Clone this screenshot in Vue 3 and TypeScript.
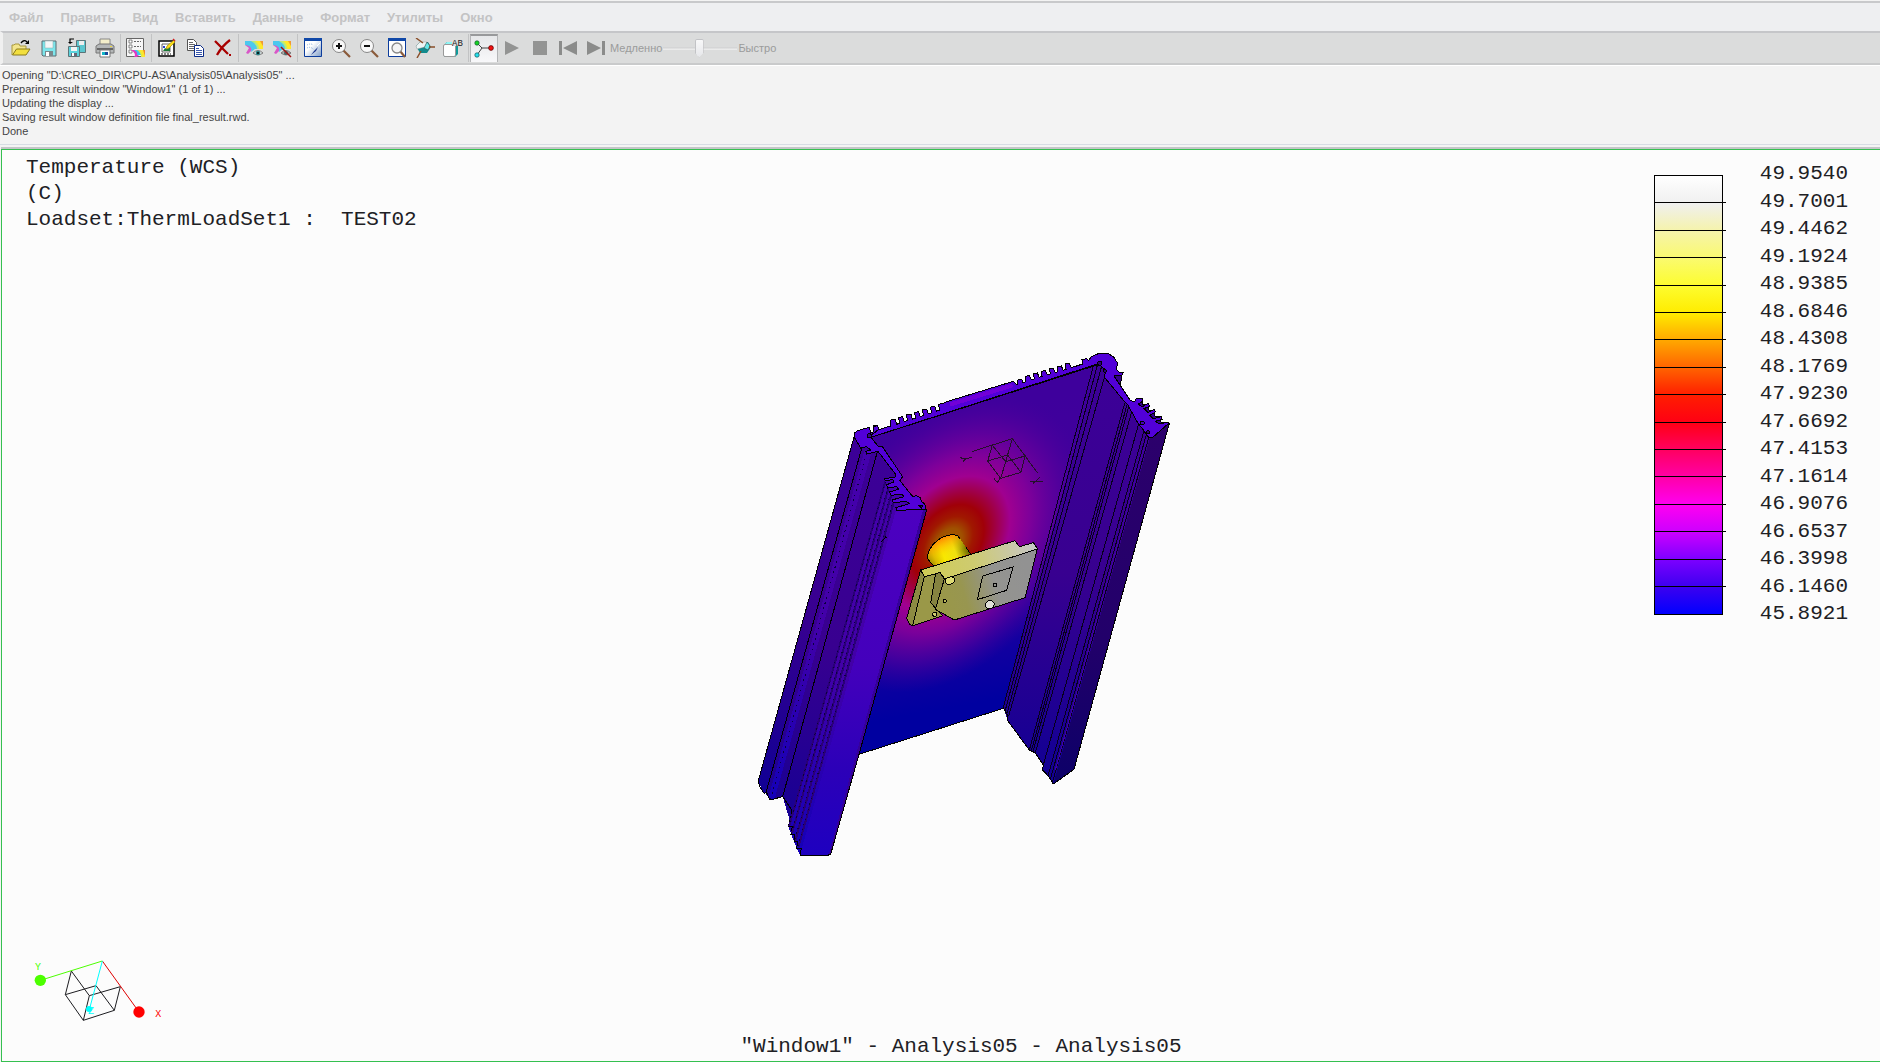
<script setup lang="ts">
const menus: string[] = ['Файл', 'Править', 'Вид', 'Вставить', 'Данные', 'Формат', 'Утилиты', 'Окно']

const messages: string[] = [
  'Opening "D:\\CREO_DIR\\CPU-AS\\Analysis05\\Analysis05" ...',
  'Preparing result window "Window1" (1 of 1) ...',
  'Updating the display ...',
  'Saving result window definition file final_result.rwd.',
  'Done',
]

const levels: string[] = [
  '49.9540', '49.7001', '49.4462', '49.1924', '48.9385', '48.6846', '48.4308', '48.1769', '47.9230',
  '47.6692', '47.4153', '47.1614', '46.9076', '46.6537', '46.3998', '46.1460', '45.8921',
]

const scale: string[] = [
  '#ffffff', '#f0f0f0', '#f5f3ac', '#fafa70', '#fdfd30', '#ffec00', '#ffa800', '#ff6400', '#ff1e00',
  '#ff0014', '#ff0060', '#ff00a8', '#ff00f0', '#cc00ff', '#7c00ff', '#3c00f0', '#0000ff',
]

const ticks: number[] = Array.from({ length: 15 }, (_, i) => Math.round((i + 1) * 27.4))
</script>

<template>
  <div class="app">
    <nav class="menu" aria-label="Меню">
      <button v-for="m in menus" :key="m" type="button">{{ m }}</button>
    </nav>

    <div class="toolbar" role="toolbar">
      <button type="button" aria-label="Открыть">
        <svg viewBox="0 0 20 20"><path d="M1 17V7h2l1-1h4l1 2h6v3" fill="#f3e58c" stroke="#a8983c" /><path d="M1.500 17l4-6H19l-4 6z" fill="#f2df3e" stroke="#8a7a1c" /><path d="M10 5q3-4 6-1" fill="none" stroke="#000" stroke-width="1.300" /><path d="M18 2v4h-4z" fill="#000" /></svg>
      </button>
      <button type="button" aria-label="Сохранить">
        <svg viewBox="0 0 20 20"><path d="M3 3h14v15H4l-1-1z" fill="#7ee6ec" stroke="#5b6b70" /><path d="M6 3h8v7H6z" fill="#f4f6f7" stroke="#8aa" stroke-width=".5" /><path d="M6 13h8v5H6z" fill="#7b888c" /><path d="M7 14h3v4H7z" fill="#fff" /></svg>
      </button>
      <button type="button" aria-label="Сохранить как">
        <svg viewBox="0 0 20 20"><path d="M9.500 2.500h9v12h-9z" fill="#5bc6cf" stroke="#5c7478" /><path d="M12 3h5v4h-5z" fill="#eee" /><path d="M1.500 8.500h11v10h-11z" fill="#5bd3dc" stroke="#5c7478" /><path d="M4 9h6v4H4z" fill="#f4f4f4" /><path d="M4 15h6v3H4z" fill="#667" /><path d="M5 15h2v3H5z" fill="#fff" /><path d="M7 1H3v4" fill="none" stroke="#000" stroke-width="1.200" /><path d="M1 4h5L3 6z" fill="#000" /></svg>
      </button>
      <button type="button" aria-label="Печать">
        <svg viewBox="0 0 20 20"><path d="M5 8V1h10v7" fill="#f3eecb" stroke="#888" /><path d="M1 8l3-2h12l3 2v7H1z" fill="#b4b7b8" stroke="#777" /><path d="M2 10h16v2H2z" fill="#666" /><path d="M5 12h10v7H5z" fill="#fff" stroke="#777" /><path d="M7 14h3v3H7z" fill="#11b6c6" /><path d="M10 14h3v3h-3z" fill="#174a9c" /><path d="M15 8h2v1h-2z" fill="#e8d23a" /></svg>
      </button>
      <span class="sep"></span>
      <button type="button" aria-label="Легенда">
        <svg viewBox="0 0 20 20"><path d="M.5.5h17v18H.5z" fill="#f6f6f6" stroke="#666" /><path d="M3 2h3v3H3zM3 7h3v3H3zM3 12h3v3H3z" fill="#fff" stroke="#555" stroke-width=".7" /><path d="M8 3.500h7M8 8.500h7" stroke="#666" stroke-dasharray="2 1" /><path d="M5 12h14v7h-4v-2h-2l-2 2H8q3-3-3-7z" fill="#e03ac0" /><path d="M8 12h11v7h-4v-2h-4q1-3-3-5z" fill="#37c8f0" /><path d="M11 12h8v7h-4q0-4-4-7z" fill="#c8ee55" /><path d="M13 12h6v7h-3q0-4-3-7z" fill="#f9e830" /><path d="M17 12h2v6z" fill="#f08a28" /></svg>
      </button>
      <span class="sep"></span>
      <button type="button" aria-label="Изменить">
        <svg viewBox="0 0 20 20"><path d="M2 3h15v15H2z" fill="#fff" stroke="#000" stroke-width="1.500" /><path d="M5 6h8v8H5z" fill="#fff" stroke="#222" stroke-width=".7" /><path d="M6 13l2-3 2 1 3-2v4z" fill="#197a35" /><path d="M4 16h10" stroke="#111" stroke-dasharray="2 1" /><path d="M6 8h2v2H6z" fill="#2a3fd0" /><path d="M9 11l1-3 7-6 1 2-6 6z" fill="#ffe018" stroke="#9d8a10" stroke-width=".7" /><path d="M16 1l2 2" stroke="#d02020" stroke-width="1.500" /></svg>
      </button>
      <button type="button" aria-label="Копировать">
        <svg viewBox="0 0 20 20"><path d="M2.500 1.500h6l3 3v8h-9z" fill="#fff" stroke="#555" /><path d="M4 4.500h4M4 6.500h6M4 8.500h6M4 10.500h6" stroke="#666" /><path d="M9.500 7.500h6l3 3v8h-9z" fill="#fff" stroke="#0b2a86" /><path d="M11 10.500h3M11 12.500h6M11 14.500h6M11 16.500h6" stroke="#3656ac" /></svg>
      </button>
      <button type="button" aria-label="Удалить">
        <svg viewBox="0 0 20 20"><path d="M2 3l13 13M17 2Q9 8 4 17" fill="none" stroke="#a80000" stroke-width="2.300" /><path d="M16 17h2" stroke="#a80000" stroke-width="2" /></svg>
      </button>
      <span class="sep"></span>
      <button type="button" aria-label="Показать">
        <svg viewBox="0 0 20 20"><path d="M1 3h18v8H9l-5 5-2-1 3-5-4-3z" fill="#d858c8" /><path d="M1 3h18v8h-8l-4 3q2-6-6-7z" fill="#4cc8ee" /><path d="M7 3h12v8h-6q0-5-6-8z" fill="#b8ec7a" /><path d="M11 3h8v8h-4q0-5-4-8z" fill="#ffe92a" /><path d="M16 3h3v5z" fill="#f29a32" /><path d="M9 15q5-5 10 0-5 4-10 0z" fill="#ddd" stroke="#666" stroke-width=".8" /><circle cx="14" cy="15" r="2.300" fill="#27878c" /><circle cx="14" cy="15" r="1" /></svg>
      </button>
      <button type="button" aria-label="Скрыть">
        <svg viewBox="0 0 20 20"><path d="M1 3h18v8H9l-5 5-2-1 3-5-4-3z" fill="#d858c8" /><path d="M1 3h18v8h-8l-4 3q2-6-6-7z" fill="#4cc8ee" /><path d="M7 3h12v8h-6q0-5-6-8z" fill="#b8ec7a" /><path d="M11 3h8v8h-4q0-5-4-8z" fill="#ffe92a" /><path d="M16 3h3v5z" fill="#f29a32" /><path d="M9 15q5-5 10 0-5 4-10 0z" fill="#aaa" stroke="#666" stroke-width=".8" /><circle cx="14" cy="15" r="2" fill="#466" /><path d="M9 9l10 10" stroke="#a01010" stroke-width="1.500" /></svg>
      </button>
      <span class="sep"></span>
      <button type="button" aria-label="Перерисовать">
        <svg viewBox="0 0 20 20"><defs><linearGradient id="pane" x2="1" y2="1"><stop offset=".4" stop-color="#fff" /><stop offset="1" stop-color="#7e9cc8" /></linearGradient></defs><path d="M1.500.5h17v18h-17z" fill="url(#pane)" stroke="#0c3c9c" /><path d="M1 0h18v3H1z" fill="#1048a8" /><path d="M4 7q4-2 6 0M4 10q4-2 7 2" fill="none" stroke="#8ab0dc" stroke-dasharray="1 1" /><path d="M15 9l-2 4-5 4 3-4z" fill="#16318c" /><path d="M14 8l3-3" stroke="#fff" /></svg>
      </button>
      <button type="button" aria-label="Увеличить">
        <svg viewBox="0 0 20 20"><path d="M12 12l7 7" stroke="#8a5a3a" stroke-width="2.200" /><circle cx="8" cy="8" r="6.500" fill="#f8f8f8" stroke="#888" /><path d="M5 8h6M8 5v6" stroke="#111" stroke-width="2" /></svg>
      </button>
      <button type="button" aria-label="Уменьшить">
        <svg viewBox="0 0 20 20"><path d="M12 12l7 7" stroke="#8a5a3a" stroke-width="2.200" /><circle cx="8" cy="8" r="6.500" fill="#f8f8f8" stroke="#888" /><path d="M5 8h6" stroke="#111" stroke-width="2" /></svg>
      </button>
      <button type="button" aria-label="Вписать">
        <svg viewBox="0 0 20 20"><path d="M1.500.5h17v18h-17z" fill="#fff" stroke="#0c3c9c" /><path d="M1 0h18v3H1z" fill="#1048a8" /><path d="M13 13l5 6" stroke="#8a5a3a" stroke-width="2.200" /><circle cx="10" cy="10" r="5" fill="#f4f4f4" stroke="#888" stroke-width="1.300" /></svg>
      </button>
      <button type="button" aria-label="Ориентация">
        <svg viewBox="0 0 20 20"><path d="M1 8l4-4h8l3 5-4 6-7 0z" fill="#128b8e" /><path d="M1 8l4-4h7l-2 5-8 2z" fill="#eef5f5" stroke="#888" stroke-width=".4" /><path d="M12 4l3 4-2 4-4-2z" fill="#66e8e8" stroke="#333" stroke-width=".5" /><path d="M1 0l7 5M14 9h6M2 20l4-7" fill="none" stroke="#8a4f2a" stroke-width="1.500" /></svg>
      </button>
      <button type="button" aria-label="Сохранённые виды">
        <svg viewBox="0 0 20 20"><path d="M1 7l3-3h11v12l-3 3H1z" fill="#0f9a9a" /><path d="M1 7l3-3h10l-2 3z" fill="#8ef4f4" /><rect x=".5" y="6.500" width="12" height="12" rx="1.500" fill="#fff" stroke="#999" /><path d="M9 0h11v8H9z" fill="#dcdddd" /><text x="9" y="8" class="tiny">AB</text></svg>
      </button>
      <span class="sep"></span>
      <button type="button" class="pressed" aria-label="Система координат" aria-pressed="true">
        <svg viewBox="0 0 20 20"><path d="M3 4l5 5h9M8 9l-5 7" fill="none" stroke="#444" /><circle cx="3" cy="4" r="2.200" fill="#16d422" stroke="#153" stroke-width=".7" /><circle cx="17" cy="9" r="2.400" fill="#f21010" stroke="#500" stroke-width=".7" /><circle cx="3" cy="16" r="2.200" fill="#27e0ee" stroke="#155" stroke-width=".7" /></svg>
      </button>
      <button type="button" disabled aria-label="Пуск"><svg viewBox="0 0 20 20"><path d="M3 3l14 7-14 7z" fill="#939493" /></svg></button>
      <button type="button" disabled aria-label="Стоп"><svg viewBox="0 0 20 20"><path d="M3 3h14v14H3z" fill="#939493" /></svg></button>
      <button type="button" disabled aria-label="Назад"><svg viewBox="0 0 20 20"><path d="M1 3h3v14H1zM19 3v14L5 10z" fill="#8b8c8b" /></svg></button>
      <button type="button" disabled aria-label="Вперёд"><svg viewBox="0 0 20 20"><path d="M16 3h3v14h-3zM1 3v14l14-7z" fill="#8b8c8b" /></svg></button>
      <label class="speed">
        <span>Медленно</span>
        <input type="range" min="0" max="100" value="48" disabled />
        <span>Быстро</span>
      </label>
    </div>

    <section class="log">
      <p v-for="m in messages" :key="m">{{ m }}</p>
    </section>

    <main class="view">
      <div class="left">
        <div class="labels">
          <p>Temperature (WCS)</p>
          <p>(C)</p>
          <p>Loadset:ThermLoadSet1 :&nbsp; TEST02</p>
        </div>
        <svg class="triad" viewBox="90 50 420 210" fill="none" stroke-width="3">
          <path d="M214 92L196 163 250 240 343 210 361 139 268 166zM268 166L250 240M196 163L288 136 343 210" stroke="#1c1c20" />
          <path d="M307 62L121 120" stroke="#4cff00" />
          <path d="M307 62L417 215" stroke="#e00000" />
          <path d="M307 62L268 208" stroke="#00ffff" />
          <circle cx="121" cy="120" r="17" fill="#4cff00" />
          <circle cx="417" cy="215" r="17" fill="#ff0000" />
          <circle cx="267" cy="206" r="9" fill="#00ffff" />
          <text x="105" y="90" fill="#4cff00">Y</text>
          <text x="466" y="231" fill="#ff0000">X</text>
          <text x="264" y="222" fill="#00ffff">Z</text>
        </svg>
      </div>

      <svg class="model" viewBox="2133 1020 1380 1560" fill="none" stroke-width="3">
        <defs>
          <linearGradient id="wall" gradientUnits="userSpaceOnUse" x1="250" y1="240" x2="430" y2="1240">
            <stop offset="0" stop-color="#3e009c" /><stop offset=".4" stop-color="#44009c" /><stop offset=".52" stop-color="#34009e" /><stop offset=".68" stop-color="#1400a0" /><stop offset=".85" stop-color="#0000a0" /><stop offset="1" stop-color="#0000a0" />
          </linearGradient>
          <radialGradient id="heat" gradientUnits="userSpaceOnUse" cx="0" cy="0" r="1" gradientTransform="translate(325 610) rotate(-52) scale(500 345)">
            <stop offset="0" stop-color="#a06000" /><stop offset=".1" stop-color="#a05000" /><stop offset=".18" stop-color="#a01800" /><stop offset=".26" stop-color="#a00008" /><stop offset=".34" stop-color="#a00040" /><stop offset=".45" stop-color="#a00090" /><stop offset=".6" stop-color="#84009a" stop-opacity=".9" /><stop offset=".78" stop-color="#68009c" stop-opacity=".55" /><stop offset="1" stop-color="#4a009c" stop-opacity="0" />
          </radialGradient>
          <linearGradient id="front" x2="0" y2="1"><stop offset="0" stop-color="#4c00c0" /><stop offset=".45" stop-color="#4400bc" /><stop offset=".75" stop-color="#2c00b8" /><stop offset="1" stop-color="#1e00c0" /></linearGradient>
          <linearGradient id="side" x2="0" y2="1"><stop offset="0" stop-color="#3c0098" /><stop offset=".5" stop-color="#380090" /><stop offset="1" stop-color="#100094" /></linearGradient>
          <linearGradient id="lite" x2="0" y2="1"><stop offset="0" stop-color="#4400ac" /><stop offset=".5" stop-color="#4200a8" /><stop offset="1" stop-color="#1400b8" /></linearGradient>
          <linearGradient id="dark" x2="0" y2="1"><stop offset="0" stop-color="#2c006c" /><stop offset=".6" stop-color="#22006a" /><stop offset="1" stop-color="#0c0068" /></linearGradient>
          <linearGradient id="plate" gradientUnits="userSpaceOnUse" x1="140" y1="240" x2="410" y2="160"><stop offset="0" stop-color="#9a9848" /><stop offset=".3" stop-color="#989650" /><stop offset=".65" stop-color="#949490" /><stop offset="1" stop-color="#929292" /></linearGradient>
          <linearGradient id="top" gradientUnits="userSpaceOnUse" x1="100" y1="160" x2="430" y2="70"><stop offset="0" stop-color="#cfcc55" /><stop offset=".45" stop-color="#cecb70" /><stop offset="1" stop-color="#c6c6c6" /></linearGradient>
          <linearGradient id="rod" gradientUnits="userSpaceOnUse" x1="112" y1="118" x2="228" y2="75"><stop offset="0" stop-color="#8c7800" /><stop offset=".18" stop-color="#d8b800" /><stop offset=".4" stop-color="#f8e800" /><stop offset=".7" stop-color="#eee010" /><stop offset="1" stop-color="#706c00" /></linearGradient>
          <linearGradient id="tip" gradientUnits="userSpaceOnUse" x1="142" y1="58" x2="168" y2="112"><stop offset="0" stop-color="#ff8000" /><stop offset="1" stop-color="#ffe800" stop-opacity="0" /></linearGradient>
        </defs>

        <!-- base wall -->
        <g transform="translate(2520 1020)">
          <path d="M88 290L778 68 490 1105 57 1243 60 700z" fill="url(#wall)" />
          <path d="M88 290L778 68 490 1105 57 1243 60 700z" fill="url(#heat)" />
          <path d="M490 1105L57 1243" stroke="#000" />
        </g>

        <!-- right profile -->
        <g transform="translate(2940 1020)">
          <path d="M355 68L378 95 440 190 460 200 510 292 568 250 282 1288 220 1332 208 1312 188 1290 190 1275 165 1238 148 1230 83 1142 70 1102z" fill="url(#side)" />
          <path d="M510 292L568 250 282 1288 220 1332z" fill="url(#dark)" />
          <path d="M568 250L282 1288 220 1332 208 1312 188 1290 190 1275 165 1238 148 1230 83 1142 82 1125 70 1102" stroke="#000" />
          <path d="M340 78L70 1102M352 76L76 1110M364 82L80 1124M378 95L86 1128M434 190L148 1230M441 194L154 1232M448 194L159 1234M459 202L166 1238M475 255L190 1275M492 272L204 1308M500 280L211 1318M508 286L217 1328" stroke="#07001c" />
          <path d="M500 296L226 1290" stroke="#4200a4" />
        </g>

        <!-- top rim with cooling fins -->
        <g transform="translate(2520 1020)" stroke="#000">
          <path d="M846 100L838 160 812 126 818 108z" fill="#35008a" />
          <path d="M880 186L906 176 906 192 926 194 926 210 944 212 944 228 964 232 962 246 984 250 940 276z" fill="#32008a" />
          <path d="M88 290L102 272 100 258 112 256 116 269 152 258 153 240 166 238 170 253 178 250 176 232 188 230 193 245 202 242 200 224 213 222 217 238 226 235 224 217 236 215 241 230 250 227 248 209 260 207 265 222 274 219 272 201 284 199 289 214 298 211 296 193 310 190 320 185 520 124 531 134 534 120 546 119 549 128 558 125 556 109 568 107 574 120 583 117 580 101 592 99 598 112 606 109 604 94 616 92 622 105 631 102 628 87 640 85 646 98 654 95 652 80 664 78 670 91 678 88 676 72 688 70 694 83 728 72 726 59 740 56 746 62 754 50 775 41 806 41 822 52 834 72 828 86 838 98 850 98 845 106 822 108 870 180 884 186 890 174 908 174 908 184 895 192 906 201 924 190 930 198 912 206 924 218 944 208 946 216 930 226 940 236 964 230 966 238 946 244 960 252 986 246 984 252 938 292 926 292 904 262 894 250 862 192 856 188 792 110 800 92 784 80 778 70 96 291z" fill="#5200d8" />
          <path d="M330 194L518 136" stroke="#7200d8" stroke-width="12" />
          <path d="M96 291L780 72" />
          <circle cx="779" cy="70" r="6" fill="#2d0078" /><circle cx="794" cy="92" r="5" fill="#2d0078" /><circle cx="907" cy="249" r="6" fill="#4600b8" /><circle cx="924" cy="277" r="5" fill="#2d0078" />
        </g>

        <!-- left profile -->
        <g transform="translate(2220 1200)">
          <path d="M343 110L414 150 480 240 470 330 180 1365 128 1190 90 1200 55 1145z" fill="url(#side)" />
          <path d="M343 110L366 145 78 1178 70 1178 55 1145z" fill="url(#side)" />
          <path d="M374 150L394 158 104 1196 90 1200 86 1190z" fill="url(#lite)" />
          <path d="M436 238L480 240 520 320 470 330 180 1365 170 1344 162 1325 153 1300 145 1280z" fill="url(#lite)" />
          <path d="M468 330L558 328 547 380 272 1362 256 1368 180 1365z" fill="url(#front)" />
          <path d="M549 330L560 328 357 1063 272 1364 266 1364z" fill="#36009a" />
          <path d="M343 108L55 1142 58 1158 72 1180 80 1178 90 1200 128 1190 155 1230 155 1240 145 1280 157 1280 153 1302 165 1302 162 1325 174 1324 170 1344 184 1344 180 1365 256 1368 272 1363 357 1063 560 330" stroke="#000" />
          <path d="M365 145L78 1178M412 155L128 1190" stroke="#000" />
          <path d="M436 245L148 1278M446 262L156 1300M455 280L166 1322M463 300L175 1342" stroke="#2a0078" stroke-width="6" />
          <path d="M380 160L92 1198M436 245L148 1278M444 262L155 1300M452 280L164 1322M460 300L173 1342" stroke="#0c0040" stroke-dasharray="4 12" />
          <path d="M425 425l12-14 4 2" stroke="#000" />
          <path d="M345 98L352 92 388 82 392 98 400 96 402 80 412 76 416 88 404 98 390 107 404 126 414 138 426 138 488 230 480 242 512 282 520 290 528 286 542 294 544 304 554 312 558 328 470 331 468 323 508 311 500 305 459 307 456 300 492 290 486 282 454 286 448 276 476 268 470 260 443 264 440 254 462 246 458 238 436 243 434 236 466 231 466 222 414 154 382 162 376 154 392 150 380 140 362 144 344 114z" fill="#5200d8" stroke="#000" />
          <circle cx="388" cy="107" r="6" fill="#36008c" stroke="#000" /><path d="M536 316l12 0-4 8z" fill="#250066" stroke="#000" />
        </g>

        <!-- reference coordinate system -->
        <g transform="translate(2520 1020)" stroke="#26102c">
          <path d="M395 335L517 296 592 398M457 316L443 363 482 415 543 397 555 348 497 365 457 316M517 296L497 365 482 415M443 363L503 345 543 397" />
          <path d="M360 353l17 4 18-5M377 357l-8 8M570 423h40M580 430l20-18M462 416l10 12 8-14" />
        </g>

        <!-- heat source assembly -->
        <g transform="translate(2670 1560)">
          <path d="M112 106Q115 82 145 59 178 38 203 47L212 58 241 101 130 137 114 118z" fill="url(#rod)" />
          <path d="M112 106Q115 82 145 59 178 38 203 47L212 58 241 101 130 137 114 118z" fill="url(#tip)" />
          <path d="M130 137L114 118Q108 88 145 59 178 38 203 47L210 56M228 82L241 101" stroke="#000" />
          <g stroke="#000">
            <path d="M92 150L375 62 388 80 430 68 442 85 440 92 165 177 150 158 103 170z" fill="url(#top)" />
            <path d="M92 150L103 170 68 317 60 314 50 295z" fill="#8c8a42" />
            <path d="M103 170L150 158 125 250 158 287 68 317z" fill="#9a9848" />
            <path d="M150 158L163 177 142 270 122 248 137 160z" fill="#858340" />
            <path d="M163 177L442 87 405 233 193 300 136 268z" fill="url(#plate)" />
            <path d="M278 168L369 141 350 211 262 239z" />
            <path d="M310 190h10v8h-9z" />
            <ellipse cx="180" cy="182" rx="15" ry="11" transform="rotate(-18 180 182)" fill="#dedc76" />
            <ellipse cx="299" cy="254" rx="14" ry="12" transform="rotate(-30 299 254)" fill="#e0e0d8" />
            <circle cx="164" cy="243" r="5" fill="#bcb958" /><circle cx="134" cy="283" r="6" fill="#cfcc70" />
          </g>
        </g>
      </svg>

      <div class="legend">
        <svg class="bar" viewBox="0 0 74 440">
          <defs>
            <linearGradient id="ramp" x2="0" y2="1">
              <stop v-for="(c, i) in scale" :key="i" :offset="i / 16" :stop-color="c" />
            </linearGradient>
          </defs>
          <rect x=".5" y=".5" width="68" height="439" fill="url(#ramp)" stroke="#000" />
          <rect v-for="t in ticks" :key="t" x="0" :y="t" width="72" height="1" />
        </svg>
        <ol>
          <li v-for="l in levels" :key="l">{{ l }}</li>
        </ol>
      </div>

      <p class="caption">"Window1" - Analysis05 - Analysis05</p>
    </main>
  </div>
</template>

<style>
body {
  margin: 0;
  background: #f3f3f3;
}
</style>

<style scoped>
.app {
  display: flex;
  flex-direction: column;
  min-height: 100vh;
  font-family: "Liberation Sans", Arial, sans-serif;
  color: #444;
}

p,
ol {
  margin: 0;
  padding: 0;
  list-style: none;
}

button {
  padding: 0;
  border: 0;
  background: none;
  font: inherit;
  color: inherit;
}

.menu {
  display: flex;
  gap: 17px;
  height: 28px;
  padding-left: 9px;
  margin-top: 1px;
  border-top: 2px solid #c8c9cb;
  background: #eeeff1;
  font-size: 13px;
  font-weight: bold;
  color: #c3c3c4;
}

.toolbar {
  display: flex;
  align-items: center;
  box-sizing: border-box;
  height: 34px;
  padding-left: 4px;
  border-top: 2px solid #c5c6c9;
  border-bottom: 2px solid #c9cacb;
  border-left: 3px solid #f0f0f0;
  background: #dbdcdc;
}

.toolbar button {
  display: flex;
  align-items: center;
  justify-content: center;
  width: 28px;
  height: 28px;
}

.toolbar button svg {
  width: 20px;
  height: 20px;
}

.toolbar .pressed {
  box-sizing: border-box;
  border: 1px solid #b4b5b7;
  border-top: 2px solid #98999b;
  border-bottom: 0;
  background: linear-gradient(#e6e7e9, #f8f8fa);
}

.tiny {
  font: 9px "Liberation Mono", monospace;
  fill: #222;
}

.sep {
  width: 1px;
  height: 28px;
  margin: 0 1px;
  background: #c2c3c4;
}

.speed {
  display: flex;
  align-items: center;
  gap: 1px;
  font-size: 11px;
  color: #9a9b9b;
}

.speed input {
  appearance: none;
  width: 74px;
  height: 20px;
  margin: 0;
  background: linear-gradient(#cfd0d1, #f0f0f0) center / 100% 3px no-repeat;
}

.speed input::-webkit-slider-thumb {
  appearance: none;
  width: 9px;
  height: 19px;
  border: 1px solid #c2c3c6;
  border-radius: 2px 2px 5px 5px;
  background: linear-gradient(#f8f8f9, #e6e7ea);
  clip-path: polygon(0 0, 100% 0, 100% 75%, 50% 100%, 0 75%);
}

.log {
  height: 76px;
  padding: 2px 2px 0;
  border-top: 1px solid #fff;
  border-bottom: 1px solid #d6dde3;
  background: #f3f3f3;
  font-size: 11px;
  line-height: 14px;
}

.view {
  flex: 1;
  display: grid;
  grid-template-columns: 1fr 460px 1fr;
  grid-template-rows: 1fr auto;
  margin: 4px 0 0 1px;
  padding-bottom: 1px;
  border: 1px solid #35c050;
  border-right: 0;
  background: #fcfcfc;
  box-shadow: 0 -2px 0 #c3c5c7;
  font: 21px/26px "Liberation Mono", "Courier New", monospace;
  color: #202024;
}

.left {
  display: flex;
  flex-direction: column;
  justify-content: space-between;
  padding-top: 5px;
}

.labels {
  padding-left: 24px;
  white-space: nowrap;
}

.triad {
  width: 140px;
  height: 70px;
  margin: 0 0 7px 28px;
}

.triad text {
  font-size: 30px;
}

.model {
  width: 460px;
  height: 520px;
  margin-top: 190px;
  shape-rendering: crispEdges;
}

.legend {
  display: flex;
  justify-content: flex-end;
  align-items: flex-start;
  gap: 32px;
  padding: 14px 32px 0 0;
}

.legend ol {
  display: flex;
  flex-direction: column;
  justify-content: space-between;
  height: 460px;
  line-height: 20px;
}

.bar {
  width: 74px;
  height: 440px;
  margin-top: 11px;
}

.caption {
  grid-column: 1 / -1;
  padding-left: 40px;
  text-align: center;
}
</style>
